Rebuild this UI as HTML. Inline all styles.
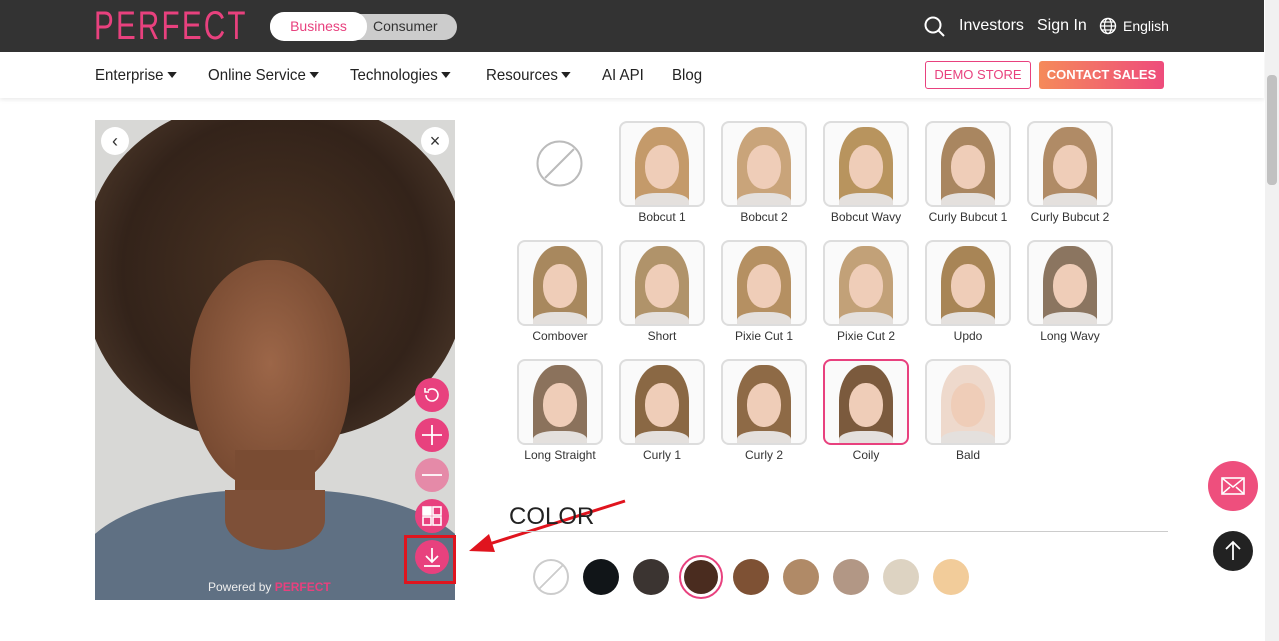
<!DOCTYPE html><html><head><style>
body{margin:0;width:1279px;height:641px;overflow:hidden;background:#fff;font-family:"Liberation Sans",sans-serif;position:relative}
.top{position:absolute;left:0;top:0;width:1264px;height:52px;background:#333}
.nav{position:absolute;left:0;top:52px;width:1264px;height:46px;background:#fff;box-shadow:0 2px 4px rgba(0,0,0,.08)}
.a{position:absolute;white-space:nowrap}
.n{font-size:16px;color:#222;top:67px;transform-origin:0 0;transform:scaleX(.94)}
.tri{display:inline-block;border-left:5px solid transparent;border-right:5px solid transparent;border-top:6px solid #222;margin-left:4px;vertical-align:2px}
.th{position:absolute;width:82px;height:82px;border:2px solid #ddd;border-radius:8px;background:#fafafa;overflow:hidden}
.lb{position:absolute;width:110px;text-align:center;font-size:12px;color:#333}
.c{position:absolute;width:36px;height:36px;border-radius:50%}
.b{position:absolute;left:415px;width:34px;height:34px;border-radius:50%;background:#e8417e}
</style></head><body>
<div class="top"></div>
<div class="a" style="left:94px;top:4px;font-size:40px;letter-spacing:3px;color:#e8417e;transform-origin:0 0;transform:scaleX(.74)">PERFECT</div>
<div class="a" style="left:270px;top:14px;width:187px;height:26px;border-radius:13px;background:#ccc"></div>
<div class="a" style="left:270px;top:12px;width:97px;height:29px;border-radius:14px;background:#fff;color:#e8417e;font-size:14px;text-align:center;line-height:29px">Business</div>
<div class="a" style="left:373px;top:18px;font-size:14px;color:#333">Consumer</div>
<svg class="a" style="left:924px;top:16px" width="22" height="22"><circle cx="9" cy="9" r="7.5" stroke="#fff" stroke-width="2" fill="none"/><path d="M14.5 14.5L20 20" stroke="#fff" stroke-width="2"/></svg>
<div class="a" style="left:959px;top:17px;color:#fff;font-size:16px">Investors</div>
<div class="a" style="left:1037px;top:17px;color:#fff;font-size:16px">Sign In</div>
<svg class="a" style="left:1099px;top:17px" width="18" height="18"><circle cx="9" cy="9" r="7.5" stroke="#fff" fill="none" stroke-width="1.4"/><ellipse cx="9" cy="9" rx="3.5" ry="7.5" stroke="#fff" fill="none" stroke-width="1.2"/><path d="M1.5 9h15M3 5h12M3 13h12" stroke="#fff" stroke-width="1.2"/></svg>
<div class="a" style="left:1123px;top:18px;color:#fff;font-size:14px">English</div>
<div class="nav"></div>
<div class="a n" style="left:95px">Enterprise<span class="tri"></span></div>
<div class="a n" style="left:208px">Online Service<span class="tri"></span></div>
<div class="a n" style="left:350px">Technologies<span class="tri"></span></div>
<div class="a n" style="left:486px">Resources<span class="tri"></span></div>
<div class="a n" style="left:602px">AI API</div>
<div class="a n" style="left:672px">Blog</div>
<div class="a" style="left:925px;top:61px;width:104px;height:26px;border:1px solid #e8417e;border-radius:3px;color:#e8417e;font-size:13px;text-align:center;line-height:26px">DEMO STORE</div>
<div class="a" style="left:1039px;top:61px;width:125px;height:28px;border-radius:3px;background:linear-gradient(90deg,#f58a5a,#ee4c7c);color:#fff;font-size:13px;font-weight:bold;text-align:center;line-height:28px">CONTACT SALES</div>
<div class="a" style="left:1265px;top:0;width:14px;height:641px;background:#f1f1f1"></div>
<div class="a" style="left:1267px;top:75px;width:10px;height:110px;background:#c1c1c1;border-radius:4px"></div>
<div class="a" style="left:95px;top:120px;width:360px;height:480px;background:#d8d8d6;overflow:hidden">
<div class="a" style="left:-10px;top:-20px;width:380px;height:340px;border-radius:45%;background:radial-gradient(circle,#4a3322 0%,#33231a 60%,#5a4433 100%)"></div>
<div class="a" style="left:95px;top:140px;width:160px;height:230px;border-radius:48%;background:radial-gradient(ellipse at 50% 45%,#9c6648,#7a4c33 70%,#5e3a27)"></div>
<div class="a" style="left:140px;top:330px;width:80px;height:80px;background:#7a4c33"></div>
<div class="a" style="left:-20px;top:370px;width:400px;height:180px;border-radius:45% 45% 0 0;background:#5f7083"></div>
<div class="a" style="left:130px;top:370px;width:100px;height:60px;border-radius:0 0 50% 50%;background:#7e5038"></div>
<div class="a" style="left:6px;top:7px;width:28px;height:28px;border-radius:50%;background:#fff;text-align:center;line-height:28px;font-size:18px;color:#333">‹</div>
<div class="a" style="left:326px;top:7px;width:28px;height:28px;border-radius:50%;background:#fff;text-align:center;line-height:28px;font-size:18px;color:#333">×</div>
<div class="a" style="left:113px;top:460px;font-size:12px;color:#eee">Powered by <b style="color:#e8417e">PERFECT</b></div>
</div>
<div class="b" style="top:378px"><svg width="34" height="34"><path d="M11 17a6 6 0 1 0 2-4.5" stroke="#fff" stroke-width="1.6" fill="none"/><path d="M10 10v4h4" stroke="#fff" stroke-width="1.6" fill="none"/></svg></div>
<div class="b" style="top:418px"><svg width="34" height="34"><path d="M17 7v20M7 17h20" stroke="#fff" stroke-width="1.8"/></svg></div>
<div class="b" style="top:458px;background:#e58aa8"><svg width="34" height="34"><path d="M7 17h20" stroke="#fff" stroke-width="1.8"/></svg></div>
<div class="b" style="top:499px"><svg width="34" height="34"><g fill="none" stroke="#fff" stroke-width="1.6"><rect x="8" y="8" width="8" height="8" fill="#fff"/><rect x="18" y="8" width="8" height="8"/><rect x="8" y="18" width="8" height="8"/><rect x="18" y="18" width="8" height="8"/></g></svg></div>
<div class="b" style="top:540px"><svg width="34" height="34"><path d="M17 8v14M11 16l6 6 6-6M9 26h16" stroke="#fff" stroke-width="1.8" fill="none"/></svg></div>
<div class="a" style="left:404px;top:535px;width:46px;height:43px;border:3px solid #e0141e"></div>
<svg class="a" style="left:465px;top:498px" width="165" height="60"><path d="M160 3L18 48" stroke="#e0141e" stroke-width="3"/><path d="M4 53L24 36L30 54Z" fill="#e0141e"/></svg>
<svg class="a" style="left:536px;top:140px" width="47" height="47"><circle cx="23.5" cy="23.5" r="22" fill="none" stroke="#bbb" stroke-width="2"/><path d="M9 38L38 9" stroke="#bbb" stroke-width="2"/></svg>
<div id="g"></div>
<div class="a" style="left:509px;top:503px;font-size:24px;color:#222">COLOR</div>
<div class="a" style="left:509px;top:531px;width:659px;height:1px;background:#ccc"></div>
<div class="c" style="left:533px;top:559px;border:2px solid #ccc;width:32px;height:32px;background:linear-gradient(135deg,#fff 48%,#ccc 48%,#ccc 52%,#fff 52%)"></div>
<div class="c" style="left:583px;top:559px;background:#111518"></div>
<div class="c" style="left:633px;top:559px;background:#3b3431"></div>
<div class="c" style="left:679px;top:555px;width:40px;height:40px;border:2px solid #e8417e;background:#fff"></div>
<div class="c" style="left:684px;top:560px;width:34px;height:34px;background:#4a2c1f"></div>
<div class="c" style="left:733px;top:559px;background:#7e5134"></div>
<div class="c" style="left:783px;top:559px;background:#b08a67"></div>
<div class="c" style="left:833px;top:559px;background:#b29785"></div>
<div class="c" style="left:883px;top:559px;background:#ddd3c2"></div>
<div class="c" style="left:933px;top:559px;background:#f2cc9a"></div>
<div class="a" style="left:1208px;top:461px;width:50px;height:50px;border-radius:50%;background:#ee4f7d"><svg width="50" height="50"><rect x="14" y="17" width="22" height="16" fill="none" stroke="#fff" stroke-width="1.6"/><path d="M14 17l11 9 11-9M14 33l8-7M36 33l-8-7" stroke="#fff" stroke-width="1.5" fill="none"/></svg></div>
<div class="a" style="left:1213px;top:531px;width:40px;height:40px;border-radius:50%;background:#222"><svg width="40" height="40"><path d="M20 29V11M13 18l7-7 7 7" stroke="#fff" stroke-width="1.8" fill="none"/></svg></div>
<script>
var d=[[619,121,"Bobcut 1","#c49a6a"],[721,121,"Bobcut 2","#c9a47a"],[823,121,"Bobcut Wavy","#b8945e"],[925,121,"Curly Bubcut 1","#a98660"],[1027,121,"Curly Bubcut 2","#b08b66"],
[517,240,"Combover","#a8885e"],[619,240,"Short","#b0936a"],[721,240,"Pixie Cut 1","#b59062"],[823,240,"Pixie Cut 2","#c2a178"],[925,240,"Updo","#a88556"],[1027,240,"Long Wavy","#8b7560"],
[517,359,"Long Straight","#8b725c"],[619,359,"Curly 1","#8a6844"],[721,359,"Curly 2","#8e6a46"],[823,359,"Coily","#7b5a3d"],[925,359,"Bald","#eed9cc"]],h="";
d.forEach(function(e){var sel=e[2]=="Coily";h+='<div class="th" style="left:'+e[0]+'px;top:'+e[1]+'px;'+(sel?'border-color:#e8417e':'')+'"><div class="a" style="left:14px;top:4px;width:54px;height:80px;border-radius:45% 45% 10% 10%;background:'+e[3]+'"></div><div class="a" style="left:24px;top:22px;width:34px;height:44px;border-radius:48%;background:#efcdb8"></div><div class="a" style="left:14px;top:70px;width:54px;height:20px;background:#e4e0dd;border-radius:40% 40% 0 0"></div></div><div class="lb" style="left:'+(e[0]-12)+'px;top:'+(e[1]+89)+'px">'+e[2]+'</div>'});
document.getElementById("g").innerHTML=h;
</script>
</body></html>
